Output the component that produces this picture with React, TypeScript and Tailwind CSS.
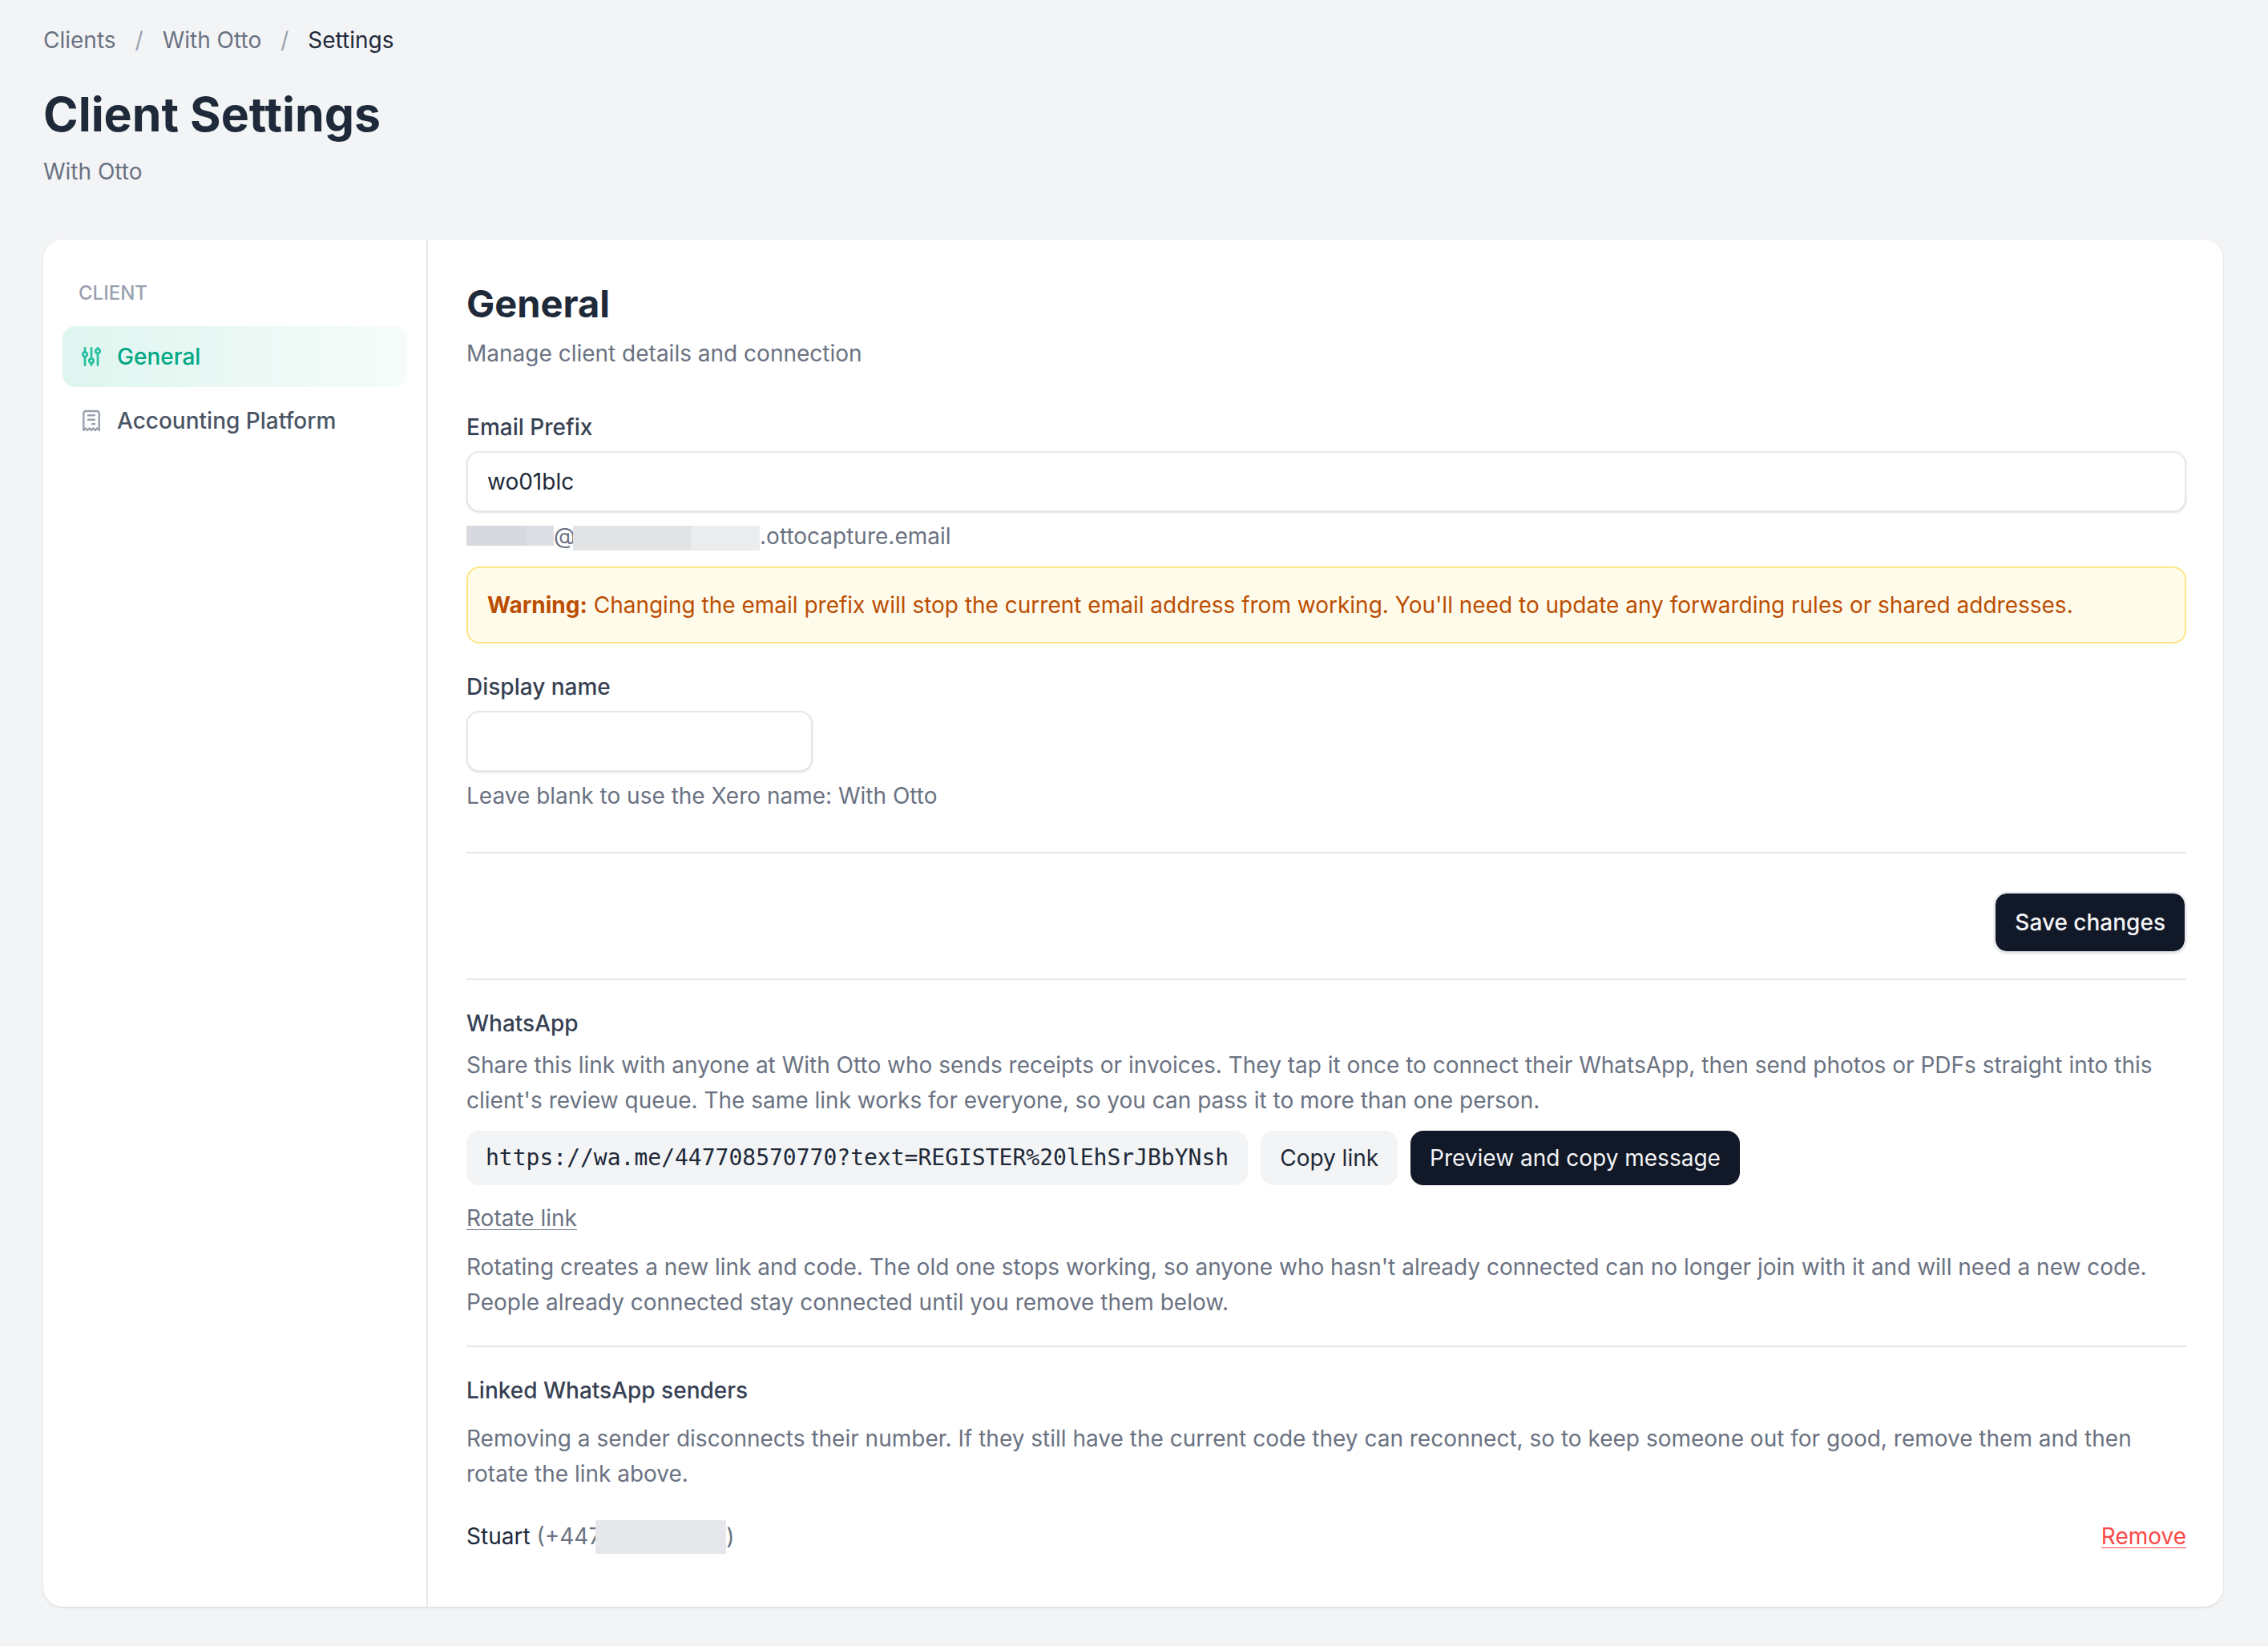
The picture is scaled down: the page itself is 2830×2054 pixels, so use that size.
import { useState } from "react";
import type { ReactNode } from "react";

const WHATSAPP_LINK = "https://wa.me/447708570770?text=REGISTER%20lEhSrJBbYNsh";

export default function App() {
  const [prefix, setPrefix] = useState("wo01blc");
  const [displayName, setDisplayName] = useState("");

  return (
    <div className="min-h-screen bg-gray-100 pt-[30px] pr-14 pb-12 pl-[54px] font-['Inter',sans-serif] text-[28px] leading-[44px] text-gray-500">
      <nav aria-label="Breadcrumb" className="flex gap-6 leading-10">
        <a href="#clients">Clients</a>
        <span className="text-gray-400">/</span>
        <a href="#with-otto">With Otto</a>
        <span className="text-gray-400">/</span>
        <span aria-current="page" className="text-gray-800">
          Settings
        </span>
      </nav>

      <header className="mt-9">
        <h1 className="text-[59px] leading-[74px] font-bold text-gray-800">Client Settings</h1>
        <p className="mt-3">With Otto</p>
      </header>

      <div className="mt-[63px] flex rounded-3xl bg-white shadow-sm">
        <aside className="w-[480px] shrink-0 border-r-2 border-gray-200 px-6 pt-12">
          <h2 className="px-5 text-[24px] leading-[38px] font-medium text-gray-400">CLIENT</h2>
          <nav aria-label="Settings" className="mt-[22px] flex flex-col gap-1">
            <SidebarLink href="#general" active icon={<SlidersIcon />}>
              General
            </SidebarLink>
            <SidebarLink href="#accounting" icon={<ReceiptIcon />}>
              Accounting Platform
            </SidebarLink>
          </nav>
        </aside>

        <main className="min-w-0 flex-1 pt-12 pr-[46px] pb-[66px] pl-12">
          <h2 className="text-[47px] leading-[64px] font-bold text-gray-800">General</h2>
          <p className="mt-2">Manage client details and connection</p>

          <form onSubmit={(e) => e.preventDefault()}>
            {/* Email prefix */}
            <div className="mt-12">
              <label htmlFor="email-prefix" className="block font-medium text-gray-700">
                Email Prefix
              </label>
              <input
                id="email-prefix"
                type="text"
                value={prefix}
                onChange={(e) => setPrefix(e.target.value)}
                className="mt-2 block h-[76px] w-full rounded-2xl border-2 border-gray-200 bg-white px-6 text-gray-800 shadow-sm"
              />
              <p className="mt-2 flex">
                <span className="mt-[9px] flex h-[25px]">
                  <span className="w-[74px] bg-[#d8d9de]" />
                  <span className="w-[35px] bg-[#dddee3]" />
                </span>
                @
                <span className="z-10 mt-[9px] -ml-[3px] flex h-[31px]">
                  <span className="w-[147px] bg-[#e2e3e5]" />
                  <span className="w-[86px] bg-[#ebecee]" />
                </span>
                .ottocapture.email
              </p>
              <div className="mt-4 rounded-2xl border-2 border-amber-200 bg-amber-50 p-6 text-amber-700">
                <strong className="font-bold">Warning:</strong> Changing the email prefix will
                stop the current email address from working. You'll need to update any forwarding
                rules or shared addresses.
              </div>
            </div>

            {/* Display name */}
            <div className="mt-8">
              <label htmlFor="display-name" className="block font-medium text-gray-700">
                Display name
              </label>
              <input
                id="display-name"
                type="text"
                value={displayName}
                onChange={(e) => setDisplayName(e.target.value)}
                className="mt-2 block h-[76px] w-[432px] rounded-2xl border-2 border-gray-200 bg-white px-6 text-gray-800 shadow-sm"
              />
              <p className="mt-2">Leave blank to use the Xero name: With Otto</p>
            </div>

            <div className="mt-12 flex justify-end border-t-2 border-gray-200 pt-12 pb-8">
              <button
                type="submit"
                className="h-[76px] rounded-2xl border-2 border-gray-200 bg-[#111827] bg-clip-padding px-6 font-medium text-gray-100 shadow-sm"
              >
                Save changes
              </button>
            </div>
          </form>

          {/* WhatsApp */}
          <section className="border-t-2 border-gray-200 py-8">
            <h3 className="font-medium text-gray-700">WhatsApp</h3>
            <p className="mt-2">
              Share this link with anyone at With Otto who sends receipts or invoices. They tap it
              once to connect their WhatsApp, then send photos or PDFs straight into this client's
              review queue. The same link works for everyone, so you can pass it to more than one
              person.
            </p>
            <div className="mt-4 flex flex-wrap gap-4 text-gray-800">
              <code className="rounded-2xl bg-gray-100 px-6 py-3 font-['DejaVu_Sans_Mono',monospace]">
                {WHATSAPP_LINK}
              </code>
              <button type="button" className="rounded-2xl bg-gray-100 px-6 py-3">
                Copy link
              </button>
              <button type="button" className="rounded-2xl bg-[#111827] px-6 py-3 text-gray-100">
                Preview and copy message
              </button>
            </div>
            <button
              type="button"
              className="mt-[19px] block underline decoration-1 underline-offset-4"
            >
              Rotate link
            </button>
            <p className="mt-[17px]">
              Rotating creates a new link and code. The old one stops working, so anyone who hasn't
              already connected can no longer join with it and will need a new code. People already
              connected stay connected until you remove them below.
            </p>
          </section>

          {/* Linked senders */}
          <section className="border-t-2 border-gray-200 pt-8">
            <h3 className="font-medium text-gray-700">Linked WhatsApp senders</h3>
            <p className="mt-4">
              Removing a sender disconnects their number. If they still have the current code they
              can reconnect, so to keep someone out for good, remove them and then rotate the link
              above.
            </p>
            <ul className="mt-[34px]">
              <li className="flex items-center justify-between">
                <div className="flex">
                  <span className="text-gray-800">Stuart</span>
                  <span className="ml-2">(+447</span>
                  <span className="z-10 mt-0.5 -ml-[7px] w-[163px] bg-gray-200" />
                  <span>)</span>
                </div>
                <button
                  type="button"
                  className="text-[#fb4848] underline decoration-1 underline-offset-4"
                >
                  Remove
                </button>
              </li>
            </ul>
          </section>
        </main>
      </div>
    </div>
  );
}

function SidebarLink({
  href,
  icon,
  active,
  children,
}: {
  href: string;
  icon: ReactNode;
  active?: boolean;
  children: ReactNode;
}) {
  return (
    <a
      href={href}
      aria-current={active ? "page" : undefined}
      className={
        active
          ? "flex items-center gap-4 rounded-2xl bg-linear-to-r from-[#dff5ef] to-[#f6fcfb] px-5 py-4 font-medium text-[#00a884]"
          : "flex items-center gap-4 rounded-2xl px-5 py-4 font-medium text-gray-600"
      }
    >
      <span className={active ? "text-[#26bfa0]" : "text-gray-400"}>{icon}</span>
      {children}
    </a>
  );
}

function SlidersIcon() {
  return (
    <svg
      className="size-8"
      viewBox="0 0 32 32"
      fill="none"
      stroke="currentColor"
      strokeWidth={2.7}
      strokeLinecap="round"
      aria-hidden="true"
    >
      <path d="M8 5.3v5.4M8 16v10.7M16 5.3v13.4M16 24v2.7M24 5.3v1.4M24 12v14.7" />
      <circle cx="8" cy="13.3" r="2.7" />
      <circle cx="16" cy="21.3" r="2.7" />
      <circle cx="24" cy="9.3" r="2.7" />
    </svg>
  );
}

function ReceiptIcon() {
  return (
    <svg
      className="size-8"
      viewBox="0 0 32 32"
      fill="none"
      stroke="currentColor"
      strokeWidth={2.4}
      strokeLinecap="round"
      strokeLinejoin="round"
      aria-hidden="true"
    >
      <path d="M6.3 28V6.7a2.7 2.7 0 0 1 2.7-2.7h14a2.7 2.7 0 0 1 2.7 2.7V28l-2.7-2.6-2.3 2.6-2.4-2.6-2.3 2.6-2.3-2.6-2.4 2.6-2.3-2.6z" />
      <path d="M12 9.3h8M12 14.7h8M17.3 20H20" />
    </svg>
  );
}
